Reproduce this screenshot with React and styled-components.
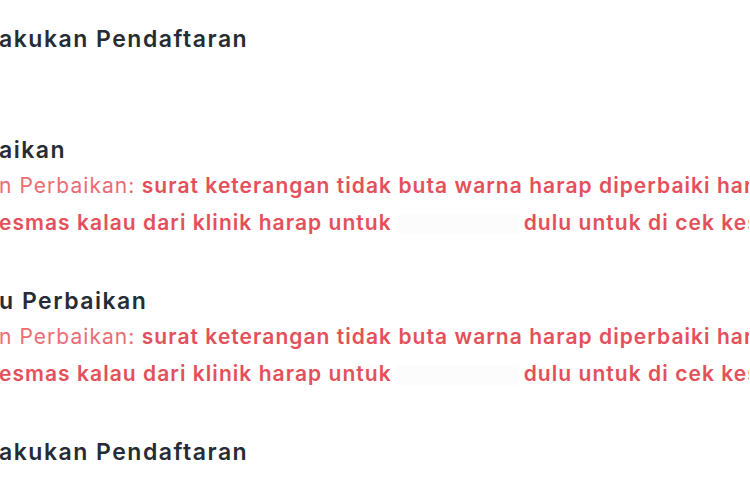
import styled, { createGlobalStyle } from "styled-components";

const GlobalStyle = createGlobalStyle`
  html, body {
    margin: 0;
    padding: 0;
    background: #ffffff;
    overflow: hidden;
  }
  body {
    font-family: Inter, "Noto Sans", "Liberation Sans", sans-serif;
  }
`;

const note = {
  label: "n Perbaikan:",
  first: "surat keterangan tidak buta warna harap diperbaiki harap",
  second: "esmas kalau dari klinik harap untuk",
  tail: "dulu untuk di cek kesehatan",
};

const items = [
  { title: "akukan Pendaftaran" },
  { title: "aikan", note },
  { title: "u Perbaikan", note },
  { title: "akukan Pendaftaran" },
];

const App = () => {
  return (
    <>
      <GlobalStyle />
      <Timeline>
        {items.map((item, i) => (
          <Step key={i}>
            <Title>{item.title}</Title>
            {item.note && (
              <Note>
                <Line>
                  <Label>{item.note.label}</Label> {item.note.first}
                </Line>
                <Line>
                  {item.note.second}
                  <Hidden />
                  {item.note.tail}
                </Line>
              </Note>
            )}
          </Step>
        ))}
      </Timeline>
    </>
  );
};
export default App;

const Timeline = styled.div`
    width: 750px;
    height: 500px;
    overflow: hidden;
    display: flex;
    flex-direction: column;
    padding-top: 24px;
    box-sizing: border-box;
    margin-left: -1px;
  `,
  Step = styled.div`
    display: flex;
    flex-direction: column;
    margin-bottom: 81px;
    &:has(> div + div) {
      margin-bottom: 45px;
    }
  `,
  Title = styled.div`
    font-size: 23px;
    font-weight: 600;
    letter-spacing: 1.5px;
    color: #262b36;
    line-height: 30px;
    white-space: nowrap;
  `,
  Note = styled.div`
    display: flex;
    flex-direction: column;
    margin-top: 2px;
  `,
  Line = styled.div`
    font-size: 21px;
    font-weight: 600;
    letter-spacing: 1.05px;
    color: #e4505a;
    line-height: 37px;
    white-space: nowrap;
  `,
  Label = styled.span`
    font-weight: 400;
    color: #ea6d74;
  `,
  Hidden = styled.span`
    display: inline-block;
    width: 122px;
    height: 20px;
    margin: 0 5px;
    vertical-align: middle;
    background: #fcfcfd;
  `;
